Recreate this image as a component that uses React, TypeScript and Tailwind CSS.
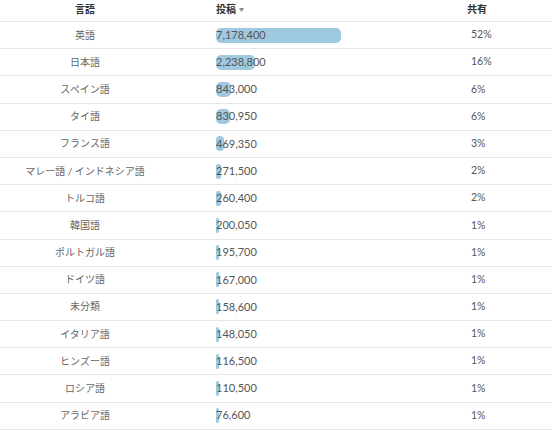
import React from "react";

const rows: [string, number, string][] = [
  ["英語", 7178400, "52%"],
  ["日本語", 2238800, "16%"],
  ["スペイン語", 843000, "6%"],
  ["タイ語", 830950, "6%"],
  ["フランス語", 469350, "3%"],
  ["マレー語 / インドネシア語", 271500, "2%"],
  ["トルコ語", 260400, "2%"],
  ["韓国語", 200050, "1%"],
  ["ポルトガル語", 195700, "1%"],
  ["ドイツ語", 167000, "1%"],
  ["未分類", 158600, "1%"],
  ["イタリア語", 148050, "1%"],
  ["ヒンズー語", 116500, "1%"],
  ["ロシア語", 110500, "1%"],
  ["アラビア語", 76600, "1%"],
];

const MAX = 7178400;
const font = { fontFamily: '"Lato", "Noto Sans CJK JP", sans-serif' };

export default function App() {
  return (
    <div className="w-[552px] h-[431px] bg-white overflow-hidden text-[#5a5a5a]" style={font}>
      <div className="grid grid-cols-[170px_46px_251px_1fr] h-[22px] border-b border-[#e6e6e6] items-center pb-[3px] text-[10px] font-bold text-[#333]">
        <div className="text-center">言語</div>
        <div />
        <div className="flex items-center gap-[3px]">
          <span>投稿</span>
          <span className="text-[5px] text-[#888] mt-[1px]">▼</span>
        </div>
        <div>共有</div>
      </div>
      {rows.map(([lang, val, pct]) => {
        const w = Math.max(2.5, (val / MAX) * 125);
        return (
          <div
            key={lang}
            className="grid grid-cols-[170px_46px_251px_1fr] h-[27.2px] border-b border-[#e6e6e6] items-center"
          >
            <div className="text-center text-[10px] text-[#666]">{lang}</div>
            <div />
            <div className="relative h-[15px] flex items-center">
              <div
                className="absolute left-0 top-0 h-[15px] bg-[#9fc9e1]"
                style={{ width: w, borderRadius: w < 6 ? 2 : 5 }}
              />
              <span className="relative text-[11px] text-[#555]">
                {val.toLocaleString("en-US")}
              </span>
            </div>
            <div className="pl-[4px] text-[10.5px] text-[#555]">{pct}</div>
          </div>
        );
      })}
    </div>
  );
}
